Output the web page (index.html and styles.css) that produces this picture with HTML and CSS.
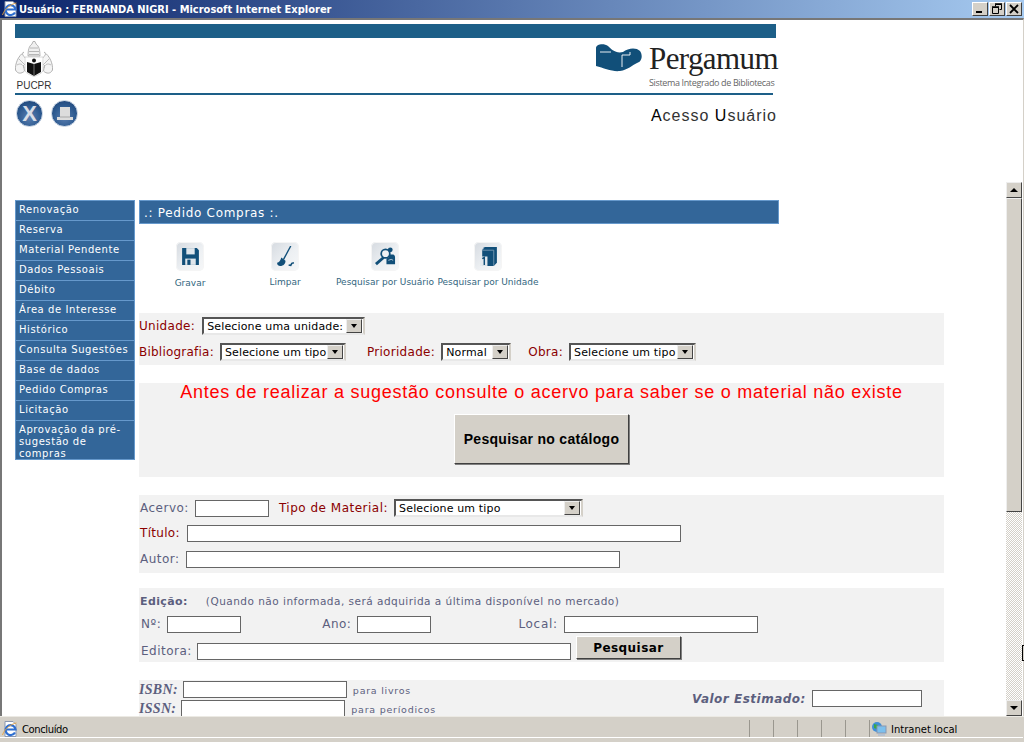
FILE: index.html
```html
<!DOCTYPE html>
<html lang="pt">
<head>
<meta charset="utf-8">
<title>Usuário : FERNANDA NIGRI</title>
<link rel="stylesheet" href="styles.css">
</head>
<body>
<div class="window">
  <header class="titlebar">
    <svg class="ie-icon" viewBox="0 0 16 16"><path d="M3 .5h8l3 3v12H3z" fill="#fff" stroke="#8a97b0"/><path d="M13 11.500a5 5 0 1 1 .6-3H4.500" fill="none" stroke="#2f6fd0" stroke-width="2.200"/><path d="M.5 14c2-6 8-11 14-12" fill="none" stroke="#e8a33c" stroke-width=".9"/></svg>
    <span class="title-text">Usuário : FERNANDA NIGRI - Microsoft Internet Explorer</span>
    <div class="win-buttons">
      <span class="win-btn"><svg viewBox="0 0 14 12"><rect x="3" y="8" width="6" height="2" fill="#000"/></svg></span>
      <span class="win-btn"><svg viewBox="0 0 14 12"><path d="M5.500 1.500h6v5h-2M5.500 1.500v2M2.500 4.500h6v6h-6z" fill="none" stroke="#000"/><path d="M2 4h7M5 1h7" stroke="#000" stroke-width="1.400"/></svg></span>
      <span class="win-btn"><svg viewBox="0 0 14 12"><path d="M3 2l8 8M11 2l-8 8" stroke="#000" stroke-width="1.800"/></svg></span>
    </div>
  </header>

  <div class="viewport">
    <section class="top-frame">
      <div class="top-bar"></div>
      <div class="brand-row">
        <div class="crest">
          <svg class="crest-art" viewBox="0 0 38 36">
            <path d="M18 .5h2l1 2.500c3 2 4 6 4 12H13c0-6 1-10 4-12z" fill="#f0f0f0" stroke="#9a9a9a" stroke-width=".7"/>
            <path d="M15 7h8M14 10.500h10M14 13.500h10" stroke="#a8a8a8" stroke-width=".8"/>
            <path d="M9 11C3 15 0 23 .5 29c2 4 6 4 9 1l-1-6M29 11c6 4 9 12 8.500 18-2 4-6 4-9 1l1-6" fill="#f4f4f4" stroke="#a8a8a8" stroke-width=".9"/>
            <path d="M2 24c3-2 6-1 7 3M36 24c-3-2-6-1-7 3M4 18l6 6M34 18l-6 6M7 13l4 5M31 13l-4 5" fill="none" stroke="#b0b0b0" stroke-width=".8"/>
            <path d="M10 16h18v13c0 3-5 5-9 6.500-4-1.500-9-3.500-9-6.500z" fill="#fff" stroke="#c0c0c0" stroke-width=".6"/>
            <path d="M12 21l7 2 7-2v10l-7 4-7-4z" fill="#111"/>
            <path d="M19 23v12" stroke="#999" stroke-width=".7"/>
            <circle cx="19" cy="19.500" r="2" fill="#111"/>
          </svg>
          <span class="crest-name">PUCPR</span>
        </div>
        <div class="pergamum">
          <svg class="scroll" viewBox="0 0 46 28">
            <path d="M0 4C0 0 8-1 12 2c3 3 8 8 15 6 5-4 13-5 17-1 3 4 2 11-3 12-5 2-9 7-17 8-8 1-16-3-24-5z" fill="#114f79"/>
            <path d="M4 8h11M26 11v12M26 11h8v-3" fill="none" stroke="#fff" stroke-width=".9"/>
          </svg>
          <div class="perg-text">
            <span class="perg-name">Pergamum</span>
            <span class="perg-sub">Sistema Integrado de Bibliotecas</span>
          </div>
        </div>
      </div>
      <div class="top-rule"></div>
      <div class="access-row">
        <div class="round-icons">
          <span class="round-btn"><span class="round-x">X</span></span>
          <span class="round-btn"><svg class="round-art" viewBox="0 0 20 20"><path d="M5 3h10v10h3v3H2v-3h3z" fill="#dcdcdc"/><path d="M5 13h10" stroke="#a8a8a8"/></svg></span>
        </div>
        <div class="access-title"><b>A</b>cesso <b>U</b>suário</div>
      </div>
    </section>

    <section class="bottom-frame">
      <div class="page">
        <nav class="menu">
          <a>Renovação</a>
          <a>Reserva</a>
          <a>Material Pendente</a>
          <a>Dados Pessoais</a>
          <a>Débito</a>
          <a>Área de Interesse</a>
          <a>Histórico</a>
          <a>Consulta Sugestões</a>
          <a>Base de dados</a>
          <a>Pedido Compras</a>
          <a>Licitação</a>
          <a class="menu-long">Aprovação da pré-sugestão de compras</a>
        </nav>
        <main class="content">
          <h1 class="page-title">.: Pedido Compras :.</h1>
          <div class="tools">
            <div class="tool tool-a">
              <span class="tile"><svg viewBox="0 0 20 20"><path d="M2 2h14l2 2v14H2z" fill="#114f79"/><rect x="6" y="2" width="8" height="6" fill="#dfe6ec"/><rect x="5" y="12" width="10" height="6" fill="#dfe6ec"/><rect x="7" y="13" width="3" height="5" fill="#114f79"/></svg></span>
              <span class="tool-label tool-low">Gravar</span>
            </div>
            <div class="tool tool-b">
              <span class="tile"><svg viewBox="0 0 20 20"><path d="M15 0L8 13" stroke="#114f79" stroke-width="1.300"/><path d="M6 11l4 3c0 3-2 5-5 5-2 0-3-1-3-3 2 0 3-2 4-5z" fill="#114f79"/><path d="M13 18l2 .5 1-2 2-.5" fill="none" stroke="#114f79" stroke-width="1.500"/></svg></span>
              <span class="tool-label">Limpar</span>
            </div>
            <div class="tool tool-c">
              <span class="tile"><svg viewBox="0 0 22 20"><path d="M1 18l8-7" stroke="#114f79" stroke-width="3"/><circle cx="11" cy="7" r="4.500" fill="#eef1f4" stroke="#114f79" stroke-width="1.800"/><circle cx="16" cy="3" r="2.500" fill="#114f79"/><path d="M12 18v-6c2 0 3-1 3-4h3c2 0 3 1 3 3v7z" fill="#114f79"/><path d="M14 14l3-1 2 1" fill="none" stroke="#dfe6ec" stroke-width=".8"/></svg></span>
              <span class="tool-label">Pesquisar por Usuário</span>
            </div>
            <div class="tool tool-d">
              <span class="tile"><svg viewBox="0 0 20 20"><path d="M6 1h12v15l-3 3H4V4z" fill="#114f79"/><path d="M6 1L4 4h11v15" fill="none" stroke="#7fa0b8" stroke-width=".8"/><rect x="2" y="10" width="7" height="9" fill="#e4e9ee"/><path d="M4 12l2-1v7" fill="none" stroke="#114f79" stroke-width="1.400"/></svg></span>
              <span class="tool-label">Pesquisar por Unidade</span>
            </div>
          </div>

          <form class="form">
            <div class="panel panel-unit">
              <div class="row row-unidade">
                <label class="req">Unidade:</label>
                <div class="sel sel-unit"><span>Selecione uma unidade:</span><i class="sel-btn"></i></div>
              </div>
              <div class="row row-biblio">
                <label class="req lbl-biblio">Bibliografia:</label>
                <div class="sel sel-biblio"><span>Selecione um tipo</span><i class="sel-btn"></i></div>
                <label class="req lbl-prio">Prioridade:</label>
                <div class="sel sel-prio"><span>Normal</span><i class="sel-btn"></i></div>
                <label class="req lbl-obra">Obra:</label>
                <div class="sel sel-obra"><span>Selecione um tipo</span><i class="sel-btn"></i></div>
              </div>
            </div>

            <div class="panel panel-warn">
              <p class="warn">Antes de realizar a sugestão consulte o acervo para saber se o material não existe</p>
              <button type="button" class="btn btn-big">Pesquisar no catálogo</button>
            </div>

            <div class="panel panel-mat">
              <div class="row row-acervo">
                <label>Acervo:</label>
                <input class="field w-74" type="text">
                <label class="req lbl-tipo">Tipo de Material:</label>
                <div class="sel sel-tipo"><span>Selecione um tipo</span><i class="sel-btn"></i></div>
              </div>
              <div class="row row-titulo">
                <label class="req">Título:</label>
                <input class="field w-494" type="text">
              </div>
              <div class="row row-autor">
                <label>Autor:</label>
                <input class="field w-434" type="text">
              </div>
            </div>

            <div class="panel panel-ed">
              <div class="row row-edicao">
                <strong class="ed-head">Edição:</strong>
                <span class="ed-note">(Quando não informada, será adquirida a última disponível no mercado)</span>
              </div>
              <div class="row row-num">
                <label>Nº:</label>
                <input class="field w-74" type="text">
                <label class="lbl-ano">Ano:</label>
                <input class="field w-74" type="text">
                <label class="lbl-local">Local:</label>
                <input class="field w-194" type="text">
              </div>
              <div class="row row-editora">
                <label>Editora:</label>
                <input class="field w-374" type="text">
                <button type="button" class="btn btn-small">Pesquisar</button>
              </div>
            </div>

            <div class="panel panel-isbn">
              <div class="isbn-col">
                <div class="row row-isbn">
                  <label class="serif-label">ISBN:</label>
                  <input class="field w-164" type="text">
                  <span class="hint">para livros</span>
                </div>
                <div class="row row-issn">
                  <label class="serif-label">ISSN:</label>
                  <input class="field w-164" type="text">
                  <span class="hint">para períodicos</span>
                </div>
              </div>
              <div class="valor">
                <label class="valor-label">Valor Estimado:</label>
                <input class="field w-110" type="text">
              </div>
            </div>
          </form>
        </main>
      </div>
      <div class="scrollbar">
        <span class="sb-btn"><i class="arrow-up"></i></span>
        <span class="sb-thumb"></span>
        <span class="sb-track"></span>
        <span class="sb-btn"><i class="arrow-down"></i></span>
      </div>
    </section>
  </div>

  <footer class="statusbar">
    <div class="status-main">
      <svg class="ie-icon" viewBox="0 0 16 16"><path d="M3 .5h8l3 3v12H3z" fill="#fff" stroke="#8a97b0"/><path d="M13 11.500a5 5 0 1 1 .6-3H4.500" fill="none" stroke="#2f6fd0" stroke-width="2.200"/><path d="M.5 14c2-6 8-11 14-12" fill="none" stroke="#e8a33c" stroke-width=".9"/></svg>
      <span class="status-done">Concluído</span>
    </div>
    <span class="status-cell"></span><span class="status-cell"></span><span class="status-cell"></span><span class="status-cell"></span><span class="status-cell"></span>
    <div class="status-zone">
      <svg class="zone-icon" viewBox="0 0 16 16"><circle cx="6" cy="6" r="5" fill="#3f8fd8"/><path d="M3 3l4 1-1 4-3-1z" fill="#3aa84a"/><rect x="6" y="5" width="9" height="7" fill="#7cc0ee" stroke="#8a97b0"/><rect x="7" y="13" width="7" height="2" fill="#b8c2d0"/></svg>
      <span class="status-zone-text">Intranet local</span>
    </div>
  </footer>
  <span class="cursor"></span>
</div>
</body>
</html>
```
FILE: styles.css
```css
* { box-sizing: border-box; }
html, body { margin: 0; padding: 0; background: #fff; overflow: hidden; }
.window { position: relative; width: 1024px; height: 742px; display: flex; flex-direction: column; font-family: "DejaVu Sans", Verdana, sans-serif; overflow: hidden; }

.titlebar { height: 18px; flex: none; display: flex; align-items: center; padding: 0 2px 0 2px; background: linear-gradient(90deg, #0a246a 0%, #a6caf0 100%); color: #fff; }
.ie-icon { width: 16px; height: 16px; flex: none; }
.title-text { margin-left: 1px; font: bold 11px "DejaVu Sans Condensed", "DejaVu Sans", sans-serif; font-stretch: condensed; white-space: nowrap; }
.win-buttons { margin-left: auto; display: flex; gap: 1px; }
.win-btn { width: 16px; height: 14px; background: #d4d0c8; border: 1px solid; border-color: #fff #404040 #404040 #fff; display: block; }
.win-btn svg { display: block; width: 14px; height: 12px; }

.viewport { flex: 1; min-height: 0; display: flex; flex-direction: column; border-top: 2px solid #777; border-left: 2px solid #777; border-right: 1px solid #d4d0c8; }

.top-frame { height: 162px; flex: none; padding: 4px 0 0 13px; }
.top-bar { width: 761px; height: 14px; background: #1d5f88; }
.brand-row { width: 761px; height: 55px; display: flex; justify-content: space-between; }
.crest { width: 38px; display: flex; flex-direction: column; align-items: center; padding-top: 3px; }
.crest-art { width: 38px; height: 36px; display: block; flex: none; }
.crest-name { margin-top: 3px; font: 10px/11px "Liberation Sans", sans-serif; color: #333; }
.pergamum { display: flex; padding-top: 6px; }
.scroll { width: 46px; height: 28px; margin-right: 7px; flex: none; }
.perg-text { display: flex; flex-direction: column; width: 127px; }
.perg-name { font: 31px/30px "Liberation Serif", serif; color: #222; letter-spacing: -.6px; white-space: nowrap; }
.perg-sub { margin-top: 3px; font: 9px/11px "Open Sans", sans-serif; color: #666; white-space: nowrap; letter-spacing: -.36px; }
.top-rule { width: 758px; height: 2px; background: #1d5f88; }
.access-row { width: 761px; display: flex; justify-content: space-between; padding-left: 1px; padding-top: 5px; }
.round-icons { display: flex; gap: 8px; }
.round-btn { width: 27px; height: 27px; border-radius: 50%; background: radial-gradient(circle at 50% 65%, #5b7fb0 0%, #2d5a90 55%, #1b3f70 100%); border: 1px solid #c2cfe0; display: flex; align-items: center; justify-content: center; }
.round-x { font: bold 22px/22px "Liberation Sans", sans-serif; color: #d8dde6; }
.round-art { width: 20px; height: 20px; }
.access-title { margin-top: 7px; font: 16px/18px "Liberation Sans", sans-serif; color: #333; letter-spacing: 1px; margin-right: -1px; }
.access-title b { font-weight: normal; color: #000; }

.bottom-frame { flex: 1; min-height: 0; display: flex; }
.page { flex: 1; min-width: 0; padding: 18px 0 0 13px; display: flex; align-items: flex-start; overflow: hidden; height: 100%; }
.menu { width: 120px; flex: none; display: flex; flex-direction: column; background: #336699; border: 1px solid #6699cc; margin-right: 4px; }
.menu a { display: block; height: 20px; padding: 0 0 0 3px; font-size: 10px; line-height: 18px; letter-spacing: .58px; color: #fff; border-bottom: 1px solid #6699cc; white-space: nowrap; }
.menu .menu-long { height: 38px; border-bottom: 0; line-height: 12px; padding-top: 3px; padding-right: 6px; white-space: normal; }

.content { width: 805px; flex: none; }
.page-title { width: 640px; height: 24px; margin: 0; padding: 0 0 0 4px; background: #336699; border: 1px solid #6699cc; font-size: 12px; font-weight: normal; line-height: 24px; letter-spacing: .7px; color: #fff; }

.tools { height: 89px; display: flex; align-items: flex-start; padding-top: 18px; }
.tool { display: flex; flex-direction: column; align-items: center; flex: none; }
.tool-a { width: 40px; margin-left: 31px; }
.tool-b { width: 40px; margin-left: 55px; }
.tool-c { width: 100px; margin-left: 30px; }
.tool-d { width: 102px; margin-left: 2px; }
.tile { width: 28px; height: 29px; border-radius: 5px; background: linear-gradient(135deg, #d5dae0 0%, #edf0f3 55%, #f6f7f8 100%); box-shadow: inset 0 0 0 1px #f5f5f5; display: flex; align-items: center; justify-content: center; }
.tile svg { width: 21px; height: 21px; display: block; }
.tool-label { margin-top: 6px; font-size: 9px; line-height: 11px; color: #336680; white-space: nowrap; }
.tool-low { margin-top: 7px; }

.form { display: flex; flex-direction: column; }
.panel { background: #f2f2f2; width: 805px; }
.row { display: flex; align-items: center; white-space: nowrap; }
label, .ed-note, .ed-head { font-size: 12px; color: #5c5f7e; letter-spacing: .5px; }
label.req { color: #8b0000; letter-spacing: .3px; }
label.lbl-biblio { letter-spacing: .22px; }

.panel-unit { height: 52px; padding-top: 3px; }
.row-unidade { height: 20px; gap: 7px; }
.row-biblio { height: 20px; margin-top: 6px; gap: 6px; }
label.lbl-prio { margin-left: 15px; }
label.lbl-obra { margin-left: 11px; }

.sel { height: 18px; display: flex; align-items: center; justify-content: space-between; background: #fff; border: 2px solid; border-color: #555 #d4d0c8 #e8e8e8 #555; padding: 0 1px 0 3px; font-size: 11px; letter-spacing: .15px; color: #000; }
.sel-btn { width: 16px; height: 14px; background: #d4d0c8; border: 1px solid; border-color: #eee #444 #444 #eee; position: relative; flex: none; }
.sel-btn::after { content: ""; position: absolute; left: 4px; top: 4px; border: 3px solid transparent; border-top: 4px solid #000; border-bottom: 0; }
.sel-unit { width: 163px; }
.sel-biblio { width: 126px; }
.sel-prio { width: 70px; }
.sel-obra { width: 127px; }
.sel-tipo { width: 189px; }

.panel-warn { height: 94px; margin-top: 18px; display: flex; flex-direction: column; align-items: center; }
.warn { margin: 0; width: 805px; text-align: center; font: 18px/19px "Liberation Sans", sans-serif; letter-spacing: .76px; color: #f00; white-space: nowrap; }
.btn { font-family: "Liberation Sans", sans-serif; font-weight: bold; color: #000; background: #d4d0c8; border: 1px solid; border-color: #fff #404040 #404040 #fff; box-shadow: 1px 1px 0 #808080; padding: 0; }
.btn-big { width: 175px; height: 50px; margin-top: 12px; font-size: 14px; letter-spacing: .3px; }
.btn-small { width: 105px; height: 23px; align-self: flex-start; margin-top: -6px; font: bold 12px "DejaVu Sans", sans-serif; letter-spacing: .45px; }

.field { height: 17px; background: #fff; border: 1px solid #666; padding: 0; display: block; flex: none; }
.w-74 { width: 74px; }
.w-110 { width: 110px; }
.w-164 { width: 164px; }
.w-194 { width: 194px; }
.w-374 { width: 374px; }
.w-434 { width: 434px; }
.w-494 { width: 494px; }

.panel-mat { height: 78px; margin-top: 18px; padding: 4px 0 0 1px; }
.row-acervo { height: 18px; gap: 6px; }
label.lbl-tipo { margin-left: 4px; letter-spacing: .5px; }
.row-titulo { height: 18px; margin-top: 7px; gap: 7px; }
.row-autor { height: 18px; margin-top: 8px; gap: 6px; }

.panel-ed { height: 74px; margin-top: 15px; padding: 6px 0 0 2px; }
.row-edicao { height: 14px; margin-left: -1px; }
.ed-head { font-size: 11px; font-weight: bold; letter-spacing: .4px; }
.ed-note { margin-left: 18px; font-size: 10.500px; letter-spacing: .48px; }
.row-num { height: 18px; margin-top: 7px; gap: 6px; }
label.lbl-ano { margin-left: 75px; }
label.lbl-local { margin-left: 81px; letter-spacing: .7px; }
.row-editora { height: 18px; margin-top: 9px; gap: 5px; }

.panel-isbn { height: 60px; margin-top: 18px; display: flex; }
.isbn-col { padding-top: 1px; }
.row-isbn, .row-issn { height: 17px; gap: 5px; }
.row-issn { margin-top: 2px; }
label.serif-label { font: italic bold 14px "Liberation Serif", serif; letter-spacing: .3px; }
.hint { margin-left: 1px; padding-top: 2px; font-size: 9.500px; letter-spacing: .75px; color: #5c5f7e; }
.valor { margin-left: 256px; margin-top: 8px; height: 19px; display: flex; align-items: center; gap: 6px; padding-top: 2px; }
label.valor-label { font-size: 12px; font-style: italic; font-weight: bold; letter-spacing: .5px; }

.scrollbar { width: 16px; margin-right: 1px; flex: none; height: 100%; display: flex; flex-direction: column; }
.sb-btn { height: 16px; flex: none; background: #d4d0c8; border: 1px solid; border-color: #eee #444 #444 #eee; position: relative; display: block; }
.sb-thumb { height: 314px; flex: none; background: #d4d0c8; border: 1px solid; border-color: #eee #444 #444 #eee; display: block; }
.sb-track { flex: 1; background: repeating-conic-gradient(#d4d0c8 0 25%, #fff 0 50%) 0 0 / 2px 2px; display: block; }
.arrow-up, .arrow-down { position: absolute; left: 3px; top: 5px; border: 4px solid transparent; }
.arrow-up { border-bottom: 4px solid #000; border-top: 0; }
.arrow-down { border-top: 4px solid #000; border-bottom: 0; }

.statusbar { height: 26px; flex: none; display: flex; background: #d4d0c8; border-top: 1px solid #eceae4; padding: 3px 1px 5px 0; color: #000; }
.status-main, .status-cell, .status-zone { box-shadow: 0 1px 0 #fff; }
.status-main { flex: 1; min-width: 0; display: flex; align-items: center; gap: 3px; padding-left: 2px; font-size: 10px; }
.status-done { letter-spacing: -.4px; margin-left: 1px; padding-top: 1px; }
.status-cell { width: 24px; border-left: 1px solid #9a978f; }
.status-zone { width: 154px; display: flex; align-items: center; gap: 4px; border-left: 1px solid #9a978f; padding-left: 1px; font-size: 10px; }
.status-zone-text { padding-top: 1px; }
.zone-icon { width: 16px; height: 16px; flex: none; }

.cursor { position: absolute; left: 1022px; top: 645px; width: 2px; height: 16px; border-left: 1px solid #000; border-top: 1px solid #000; border-bottom: 1px solid #000; }
```
